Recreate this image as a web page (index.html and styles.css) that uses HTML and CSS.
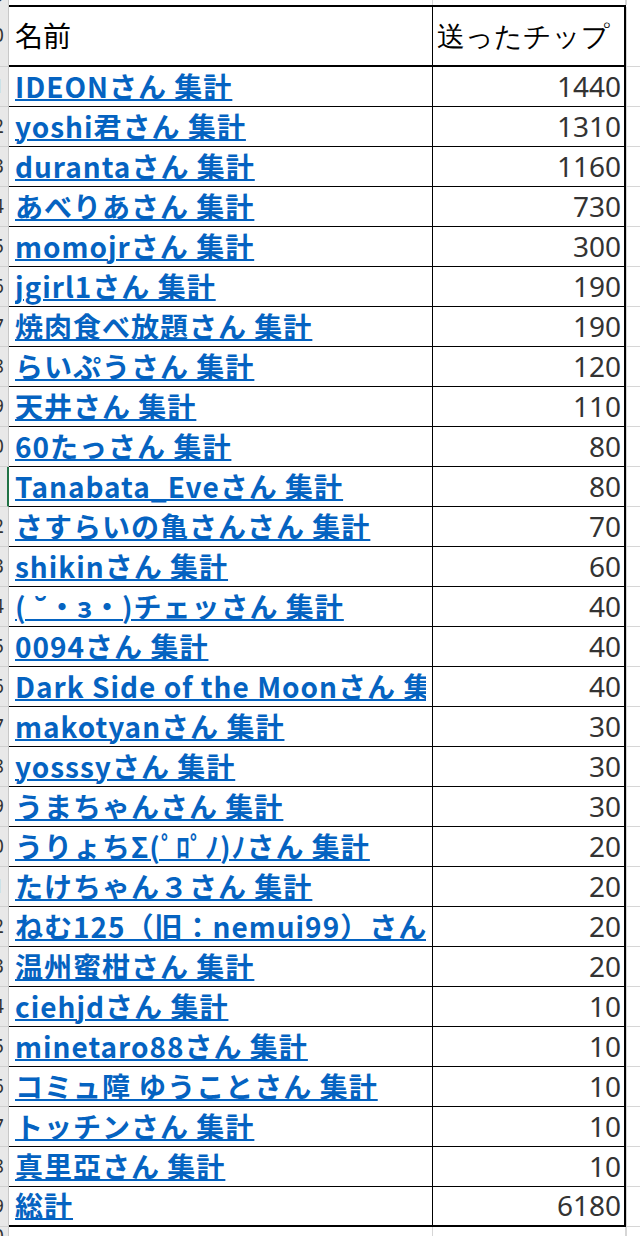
FILE: index.html
```html
<!DOCTYPE html>
<html lang="ja">
<head>
<meta charset="utf-8">
<title>送ったチップ</title>
<link rel="stylesheet" href="styles.css">
</head>
<body>
<div class="sheet">
  <div class="row strip">
    <div class="rh"><span>9</span></div>
    <div class="name"></div>
    <div class="val"></div>
    <div class="gut"></div>
  </div>
  <div class="row head">
    <div class="rh"><span>10</span></div>
    <div class="name"><div class="clip">名前</div></div>
    <div class="val"><div class="clip">送ったチップ</div></div>
    <div class="gut"></div>
  </div>
  <div class="row"><div class="rh"><span>11</span></div><div class="name"><div class="clip"><a>IDEONさん 集計</a></div></div><div class="val">1440</div><div class="gut"></div></div>
  <div class="row"><div class="rh"><span>12</span></div><div class="name"><div class="clip"><a>yoshi君さん 集計</a></div></div><div class="val">1310</div><div class="gut"></div></div>
  <div class="row"><div class="rh"><span>13</span></div><div class="name"><div class="clip"><a>durantaさん 集計</a></div></div><div class="val">1160</div><div class="gut"></div></div>
  <div class="row"><div class="rh"><span>14</span></div><div class="name"><div class="clip"><a>あべりあさん 集計</a></div></div><div class="val">730</div><div class="gut"></div></div>
  <div class="row"><div class="rh"><span>15</span></div><div class="name"><div class="clip"><a>momojrさん 集計</a></div></div><div class="val">300</div><div class="gut"></div></div>
  <div class="row"><div class="rh"><span>16</span></div><div class="name"><div class="clip"><a>jgirl1さん 集計</a></div></div><div class="val">190</div><div class="gut"></div></div>
  <div class="row"><div class="rh"><span>17</span></div><div class="name"><div class="clip"><a>焼肉食べ放題さん 集計</a></div></div><div class="val">190</div><div class="gut"></div></div>
  <div class="row"><div class="rh"><span>18</span></div><div class="name"><div class="clip"><a>らいぷうさん 集計</a></div></div><div class="val">120</div><div class="gut"></div></div>
  <div class="row"><div class="rh"><span>19</span></div><div class="name"><div class="clip"><a>天井さん 集計</a></div></div><div class="val">110</div><div class="gut"></div></div>
  <div class="row"><div class="rh"><span>20</span></div><div class="name"><div class="clip"><a>60たっさん 集計</a></div></div><div class="val">80</div><div class="gut"></div></div>
  <div class="row"><div class="rh sel"><span>21</span></div><div class="name"><div class="clip"><a>Tanabata_Eveさん 集計</a></div></div><div class="val">80</div><div class="gut"></div></div>
  <div class="row"><div class="rh"><span>22</span></div><div class="name"><div class="clip"><a>さすらいの亀さんさん 集計</a></div></div><div class="val">70</div><div class="gut"></div></div>
  <div class="row"><div class="rh"><span>23</span></div><div class="name"><div class="clip"><a>shikinさん 集計</a></div></div><div class="val">60</div><div class="gut"></div></div>
  <div class="row"><div class="rh"><span>24</span></div><div class="name"><div class="clip"><a>( ˘・з・)チェッさん 集計</a></div></div><div class="val">40</div><div class="gut"></div></div>
  <div class="row"><div class="rh"><span>25</span></div><div class="name"><div class="clip"><a>0094さん 集計</a></div></div><div class="val">40</div><div class="gut"></div></div>
  <div class="row"><div class="rh"><span>26</span></div><div class="name"><div class="clip"><a>Dark Side of the Moonさん 集計</a></div></div><div class="val">40</div><div class="gut"></div></div>
  <div class="row"><div class="rh"><span>27</span></div><div class="name"><div class="clip"><a>makotyanさん 集計</a></div></div><div class="val">30</div><div class="gut"></div></div>
  <div class="row"><div class="rh"><span>28</span></div><div class="name"><div class="clip"><a>yosssyさん 集計</a></div></div><div class="val">30</div><div class="gut"></div></div>
  <div class="row"><div class="rh"><span>29</span></div><div class="name"><div class="clip"><a>うまちゃんさん 集計</a></div></div><div class="val">30</div><div class="gut"></div></div>
  <div class="row"><div class="rh"><span>30</span></div><div class="name"><div class="clip"><a>うりょちΣ(ﾟﾛﾟﾉ)ﾉさん 集計</a></div></div><div class="val">20</div><div class="gut"></div></div>
  <div class="row"><div class="rh"><span>31</span></div><div class="name"><div class="clip"><a>たけちゃん３さん 集計</a></div></div><div class="val">20</div><div class="gut"></div></div>
  <div class="row"><div class="rh"><span>32</span></div><div class="name"><div class="clip"><a>ねむ125（旧：nemui99）さん 集計</a></div></div><div class="val">20</div><div class="gut"></div></div>
  <div class="row"><div class="rh"><span>33</span></div><div class="name"><div class="clip"><a>温州蜜柑さん 集計</a></div></div><div class="val">20</div><div class="gut"></div></div>
  <div class="row"><div class="rh"><span>34</span></div><div class="name"><div class="clip"><a>ciehjdさん 集計</a></div></div><div class="val">10</div><div class="gut"></div></div>
  <div class="row"><div class="rh"><span>35</span></div><div class="name"><div class="clip"><a>minetaro88さん 集計</a></div></div><div class="val">10</div><div class="gut"></div></div>
  <div class="row"><div class="rh"><span>36</span></div><div class="name"><div class="clip"><a>コミュ障 ゆうことさん 集計</a></div></div><div class="val">10</div><div class="gut"></div></div>
  <div class="row"><div class="rh"><span>37</span></div><div class="name"><div class="clip"><a>トッチンさん 集計</a></div></div><div class="val">10</div><div class="gut"></div></div>
  <div class="row"><div class="rh"><span>38</span></div><div class="name"><div class="clip"><a>真里亞さん 集計</a></div></div><div class="val">10</div><div class="gut"></div></div>
  <div class="row total"><div class="rh"><span>39</span></div><div class="name"><div class="clip"><a>総計</a></div></div><div class="val">6180</div><div class="gut"></div></div>
  <div class="row strip bottom">
    <div class="rh"><span>40</span></div>
    <div class="name"></div>
    <div class="val"></div>
    <div class="gut"></div>
  </div>
</div>
</body>
</html>
```

FILE: styles.css
```css
* { box-sizing: border-box; }

body {
  margin: 0;
  background: #ffffff;
  font-family: "Noto Sans CJK JP", "Noto Sans", sans-serif;
}

.sheet {
  display: flex;
  flex-direction: column;
  width: 640px;
}

.row {
  display: flex;
  height: 40px;
}

.rh {
  width: 9px;
  flex: none;
  background: #e8e8e8;
  border-right: 1px solid #c8c8c8;
  border-bottom: 1px solid #d0d0d0;
  overflow: hidden;
  display: flex;
  align-items: center;
  justify-content: flex-end;
  font-family: "Noto Sans", sans-serif;
  font-size: 19px;
  color: #333333;
  line-height: 1;
}

.rh span {
  margin-right: 4px;
  white-space: nowrap;
}

.rh.sel {
  border-right: 2px solid #217346;
}

.name {
  width: 424px;
  flex: none;
  border-right: 1px solid #000;
  border-bottom: 1px solid #000;
  padding: 0 6px 2px 6px;
  display: flex;
  align-items: center;
}

.clip {
  width: 100%;
  overflow: hidden;
  white-space: nowrap;
  font-size: 28px;
  line-height: 38px;
}

.name a {
  color: #0563c1;
  font-weight: 700;
  letter-spacing: 1px;
  text-decoration: underline;
  text-decoration-thickness: 1.5px;
  text-underline-offset: 1px;
}

.val {
  width: 193px;
  flex: none;
  border-right: 2px solid #000;
  border-bottom: 1px solid #000;
  display: flex;
  align-items: center;
  justify-content: flex-end;
  padding: 0 3px 2px 0;
  font-family: "Noto Sans", sans-serif;
  font-size: 28px;
  color: #333333;
  line-height: 38px;
}

.gut {
  flex: 1;
  border-left: 1px solid #d6d6d6;
  border-bottom: 1px solid #d6d6d6;
}

/* header row */
.head {
  height: 62px;
}

.head .name,
.head .val {
  border-top: 2px solid #000;
  border-bottom: 2px solid #000;
}

.head .val {
  justify-content: flex-start;
  padding-left: 4px;
}

.head .clip {
  color: #000;
  font-weight: 400;
  line-height: 40px;
}

.head .gut {
  margin-top: 2px;
}

/* total row */
.total .name,
.total .val {
  border-bottom: 2px solid #000;
}

/* strips above and below the table */
.strip {
  height: 5px;
}

.strip .name {
  border-right: 1px solid #d6d6d6;
  border-bottom: none;
}

.strip .val {
  border-right: 1px solid #d6d6d6;
  border-bottom: none;
}

.strip .gut {
  border-bottom: none;
}

.strip .rh {
  border-bottom: none;
  align-items: flex-end;
}

.strip.bottom {
  height: 10px;
}

.strip.bottom .rh {
  align-items: flex-start;
}
```
